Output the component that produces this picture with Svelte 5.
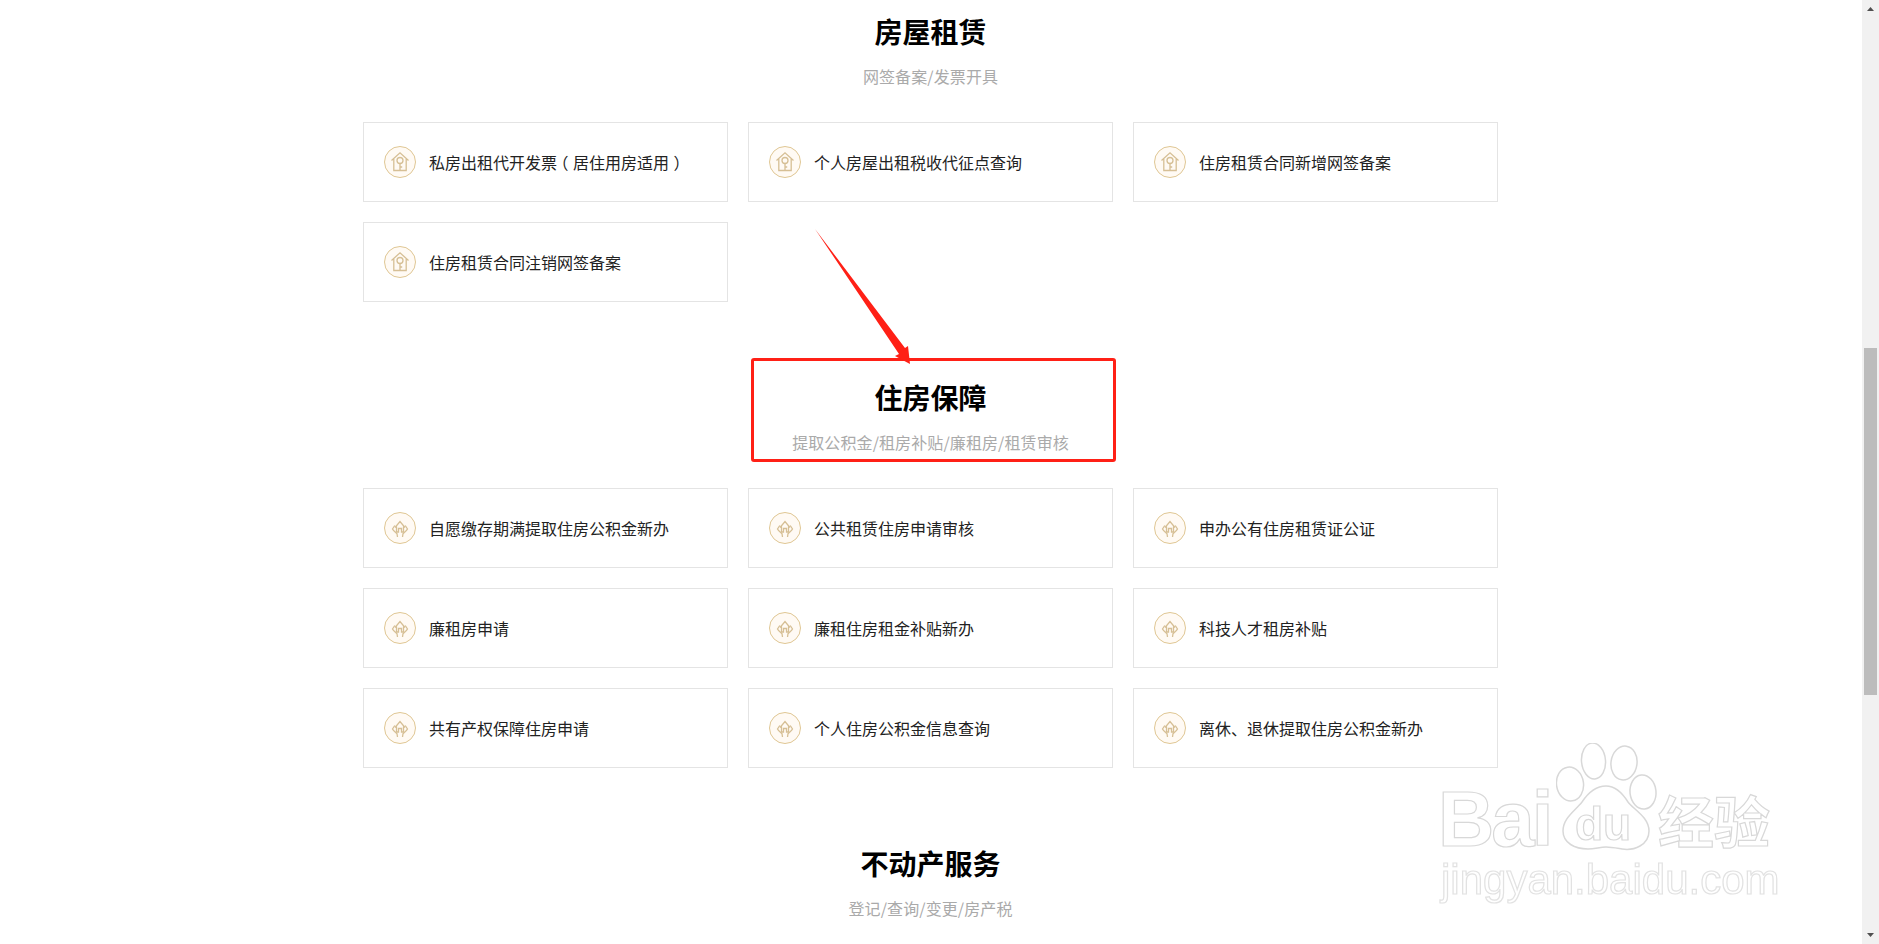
<script lang="ts">
  const sections = [
    {
      title: "房屋租赁",
      sub: "网签备案/发票开具",
      icon: "key",
      items: ["私房出租代开发票（居住用房适用）", "个人房屋出租税收代征点查询", "住房租赁合同新增网签备案", "住房租赁合同注销网签备案"]
    },
    {
      title: "住房保障",
      sub: "提取公积金/租房补贴/廉租房/租赁审核",
      icon: "hands",
      items: [
        "自愿缴存期满提取住房公积金新办",
        "公共租赁住房申请审核",
        "申办公有住房租赁证公证",
        "廉租房申请",
        "廉租住房租金补贴新办",
        "科技人才租房补贴",
        "共有产权保障住房申请",
        "个人住房公积金信息查询",
        "离休、退休提取住房公积金新办"
      ]
    },
    { title: "不动产服务", sub: "登记/查询/变更/房产税", icon: "key", items: [] as string[] }
  ]
</script>

<div class="page">
  <main>
    {#each sections as s}
      <section>
        <h2>{s.title}</h2>
        <p class="sub">{s.sub}</p>
        {#if s.items.length}
          <div class="grid">
            {#each s.items as item}
              <a class="card" href="#top">
                <svg class="icon" width="32" height="32" viewBox="0 0 32 32">
                  <circle cx="16" cy="16" r="15.5" fill="#fffaf4" stroke="#dfc693" />
                  <g fill="none" stroke="#d6bf95" stroke-width="1.300">
                    {#if s.icon === "key"}
                      <path d="M7.500 14.500 16 6.800l8.500 7.700M9.800 13v11.500h12.400V13" />
                      <circle cx="16" cy="14.500" r="3" />
                      <path d="M16 17.500v6.500M16 21h2.200" />
                    {:else}
                      <path d="M11 15.500 16 9.500l5 6M12.500 14.500v5.500h2v-3.500h3V20h2v-5.500" />
                      <path d="M10.800 13.500 8.500 17c1 2 3 3 4.500 4.700l.5 3.300M21.200 13.500 23.500 17c-1 2-3 3-4.500 4.700l-.5 3.300" />
                    {/if}
                  </g>
                </svg>
                <span class="label">{#each item.split(/([（）])/) as part, i}{#if i % 2}<span class={part === "（" ? "open" : "close"}>{part}</span>{:else}{part}{/if}{/each}</span>
              </a>
            {/each}
          </div>
        {/if}
      </section>
    {/each}
  </main>

  <aside class="scrollbar">
    <svg class="arrow" width="7" height="4" viewBox="0 0 7 4"><path d="M3.500 0 7 4H0z" fill="#505050" /></svg>
    <div class="track"><div class="thumb"></div></div>
    <svg class="arrow" width="7" height="4" viewBox="0 0 7 4"><path d="M0 0h7L3.500 4z" fill="#505050" /></svg>
  </aside>

  <!-- annotation drawn over the screenshot -->
  <div class="mark"></div>
  <svg class="pointer" width="100" height="140" viewBox="0 0 100 140">
    <path d="M1 1 91 120 94 118 96 136 81 128 85 126z" fill="#ff2016" />
  </svg>

  <div class="watermark">
    <svg class="paw" width="102" height="112" viewBox="0 0 102 112">
      <g fill="#fff" stroke="#d8d8d8" stroke-width="1.500">
        <ellipse cx="14" cy="41" rx="13.500" ry="17" transform="rotate(-8 14 41)" />
        <ellipse cx="37.500" cy="18" rx="12" ry="18" transform="rotate(-5 37.500 18)" />
        <ellipse cx="68" cy="20" rx="13" ry="17" transform="rotate(8 68 20)" />
        <ellipse cx="87" cy="49" rx="13" ry="17" transform="rotate(-6 87 49)" />
        <path d="M50 43c10 0 17 8 22 16 5 7 21 15 21 29 0 14-15 20-27 18-6-1-11-2-16-2-6 0-11 2-18 2-13 0-25-6-25-18 0-13 12-20 19-29 6-9 13-16 24-16z" />
      </g>
    </svg>
    <span class="wm bai">Bai</span>
    <span class="wm du">du</span>
    <span class="wm jy">经验</span>
    <span class="wm url">jingyan.baidu.com</span>
  </div>
</div>

<style>
  :global(body) {
    margin: 0;
    background: #fff;
  }
  .page {
    position: relative;
    display: flex;
    height: 944px;
    overflow: hidden;
    font-family: "Noto Sans CJK SC", "Liberation Sans", sans-serif;
  }
  main {
    flex: 1;
    padding-top: 11px;
  }
  section {
    width: 1135px;
    margin: 0 0 75px 363px;
  }
  h2 {
    margin: 0;
    height: 40px;
    line-height: 40px;
    font-size: 28px;
    font-weight: 700;
    color: #000;
    text-align: center;
  }
  .sub {
    margin: 13px 0 0;
    height: 24px;
    line-height: 24px;
    font-size: 16px;
    letter-spacing: 0.1px;
    color: #aaa;
    text-align: center;
  }
  .grid {
    display: grid;
    grid-template-columns: repeat(3, 365px);
    gap: 20px;
    margin-top: 34px;
  }
  .card {
    display: flex;
    align-items: center;
    gap: 13px;
    box-sizing: border-box;
    height: 80px;
    padding: 0 20px;
    border: 1px solid #e4e4e4;
    font-size: 16px;
    color: #222;
    text-decoration: none;
  }
  .icon {
    flex: none;
  }
  .label {
    white-space: nowrap;
  }
  /* centre the full-width brackets in their cell */
  .open {
    margin: 0 4.5px 0 -4.5px;
  }
  .close {
    margin: 0 -4.5px 0 4.5px;
  }
  .scrollbar {
    flex: none;
    display: flex;
    flex-direction: column;
    align-items: center;
    width: 17px;
    background: #f1f1f1;
  }
  .arrow {
    flex: none;
    margin: 7px 0;
  }
  .track {
    flex: 1;
    align-self: stretch;
    padding: 330px 2px 0;
  }
  .thumb {
    height: 347px;
    background: #bcbcbc;
  }
  .mark {
    position: absolute;
    left: 751px;
    top: 358px;
    width: 365px;
    height: 104px;
    box-sizing: border-box;
    border: 3px solid #ff2016;
    border-radius: 3px;
  }
  .pointer {
    position: absolute;
    left: 814px;
    top: 228px;
  }
  .watermark {
    position: absolute;
    left: 1430px;
    top: 735px;
    width: 360px;
    height: 180px;
    filter: blur(0.4px);
  }
  .paw {
    position: absolute;
    left: 126px;
    top: 8px;
  }
  .wm {
    position: absolute;
    color: #fff;
    -webkit-text-stroke: 1.2px #d8d8d8;
    font-family: "Liberation Sans", sans-serif;
    font-weight: 700;
    white-space: nowrap;
  }
  .bai {
    left: 8px;
    top: 42px;
    font-size: 78px;
    line-height: 84px;
    letter-spacing: -3px;
  }
  .du {
    left: 145px;
    top: 64px;
    font-size: 46px;
    line-height: 50px;
  }
  .jy {
    left: 228px;
    top: 46px;
    font-size: 56px;
    line-height: 76px;
    font-family: "Noto Sans CJK SC", sans-serif;
  }
  .url {
    left: 11px;
    top: 120px;
    font-size: 42px;
    line-height: 50px;
    font-weight: 400;
    -webkit-text-stroke: 1.2px #e2e2e2;
  }
</style>
